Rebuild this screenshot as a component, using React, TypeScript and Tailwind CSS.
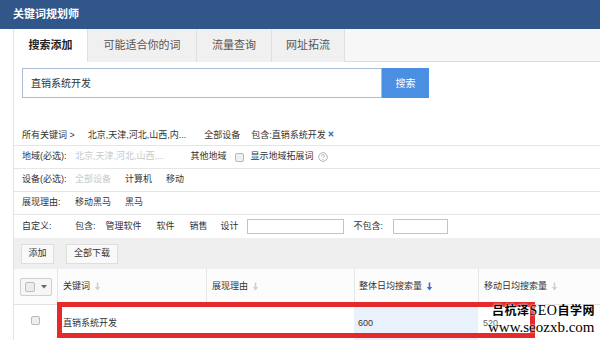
import React from 'react';

const Arrow: React.FC<{ active?: boolean }> = ({ active }) => (
  <svg width="7" height="9" viewBox="0 0 7 9" className="ml-[4px]">
    <path d="M3.5 0.5v6" stroke={active ? '#3a6fc6' : '#cfcfcf'} strokeWidth="1.6" />
    <path d="M0.8 5l2.7 3.5L6.2 5z" fill={active ? '#3a6fc6' : '#cfcfcf'} />
  </svg>
);

const Check: React.FC = () => (
  <span className="inline-block w-[9px] h-[9px] border border-[#b9b9b9] bg-[#efefef] rounded-[2px]" />
);

const App: React.FC = () => {
  const tabs = [
    { label: '搜索添加', w: 'w-[74px]', active: true },
    { label: '可能适合你的词', w: 'w-[109px]', active: false },
    { label: '流量查询', w: 'w-[75px]', active: false },
    { label: '网址拓流', w: 'w-[73px]', active: false },
  ];

  return (
    <div className="relative w-[600px] h-[340px] overflow-hidden bg-white text-[#333] font-['Liberation_Sans','Noto_Sans_CJK_SC',sans-serif]">
      <div className="h-[29px] bg-[#30568a] flex items-center pl-[13px] text-white text-[11px] font-bold">
        关键词规划师
      </div>

      <div className="ml-[13px] h-[311px] border-l border-[#e2e2e2]">
        {/* tabs */}
        <div className="h-[33px] flex bg-[#f7f7f7] border-b border-[#dcdcdc]">
          {tabs.map((t) => (
            <div
              key={t.label}
              className={`${t.w} h-[33px] flex items-center justify-center text-[11px] border-r border-[#e0e0e0] ${
                t.active ? 'bg-white font-bold text-[#222]' : 'bg-[#f0f0f0] text-[#555] h-[32px]'
              }`}
            >
              {t.label}
            </div>
          ))}
        </div>

        {/* search */}
        <div className="mt-[6px] ml-[8px] flex h-[30px]">
          <div className="w-[360px] h-[30px] border border-[#a9bcd4] flex items-center pl-[8px] text-[10px] text-[#333]">
            直销系统开发
          </div>
          <div className="w-[47px] h-[30px] bg-[#4b8fe2] text-white text-[10px] flex items-center justify-center">
            搜索
          </div>
        </div>

        {/* filters */}
        <div className="mt-[29px] text-[9px]">
          <div className="h-[19px] flex items-center pl-[8px] pb-[1px] border-b border-[#e6e6e6]">
            <span>所有关键词 &gt;</span>
            <span className="ml-[13px]">北京,天津,河北,山西,内...</span>
            <span className="ml-[18px]">全部设备</span>
            <span className="ml-[11px]">包含:直销系统开发</span>
            <svg width="6" height="6" viewBox="0 0 6 6" className="ml-[2px] mb-[3px]">
              <path d="M0.8 0.8l4.4 4.4M5.2 0.8L0.8 5.2" stroke="#3a73c8" strokeWidth="1.4" />
            </svg>
          </div>

          <div className="h-[23px] flex items-center pl-[8px] border-b border-[#e6e6e6]">
            <span className="w-[53px]">地域(必选):</span>
            <span className="text-[#c9c9c9]">北京,天津,河北,山西,...</span>
            <span className="ml-[26px]">其他地域</span>
            <span className="ml-[8px] flex items-center"><Check /></span>
            <span className="ml-[7px]">显示地域拓展词</span>
            <svg width="10" height="10" viewBox="0 0 10 10" className="ml-[4px]">
              <circle cx="5" cy="5" r="4.3" fill="none" stroke="#aaa" strokeWidth="0.9" />
              <path d="M3.6 4a1.4 1.4 0 1 1 1.9 1.3c-.4.2-.5.4-.5.9" fill="none" stroke="#aaa" strokeWidth="0.9" />
              <circle cx="5" cy="7.4" r="0.5" fill="#aaa" />
            </svg>
          </div>

          <div className="h-[23px] flex items-center pl-[8px] border-b border-[#e6e6e6]">
            <span className="w-[53px]">设备(必选):</span>
            <span className="text-[#c9c9c9]">全部设备</span>
            <span className="ml-[14px]">计算机</span>
            <span className="ml-[14px]">移动</span>
          </div>

          <div className="h-[23px] flex items-center pl-[8px] border-b border-[#e6e6e6]">
            <span className="w-[53px]">展现理由:</span>
            <span>移动黑马</span>
            <span className="ml-[14px]">黑马</span>
          </div>

          <div className="h-[23px] flex items-center pl-[8px]">
            <span className="w-[53px]">自定义:</span>
            <span>包含:</span>
            <span className="ml-[10px]">管理软件</span>
            <span className="ml-[15px]">软件</span>
            <span className="ml-[15px]">销售</span>
            <span className="ml-[13px]">设计</span>
            <span className="ml-[8px] w-[97px] h-[15px] border border-[#c4c4c4] bg-white" />
            <span className="ml-[10px]">不包含:</span>
            <span className="ml-[10px] w-[55px] h-[15px] border border-[#c4c4c4] bg-white" />
          </div>
        </div>

        {/* toolbar */}
        <div className="h-[31px] bg-[#efefef] flex items-center pl-[7px] text-[9px]">
          <div className="w-[33px] h-[20px] border border-[#dedede] bg-[#f9f9f9] flex items-center justify-center">
            添加
          </div>
          <div className="ml-[12px] w-[52px] h-[20px] border border-[#dedede] bg-[#f9f9f9] flex items-center justify-center">
            全部下载
          </div>
        </div>

        {/* table */}
        <div className="text-[9px]">
          <div className="grid grid-cols-[43px_149px_148px_124px_1fr] h-[36px] bg-[#fcfcfc] border-b border-[#e3e3e3]">
            <div className="flex items-center justify-center">
              <div className="w-[32px] h-[18px] border border-[#cfcfcf] bg-[#f6f6f6] rounded-[2px] flex items-center pl-[4px]">
                <span className="inline-block w-[10px] h-[10px] border border-[#bdbdbd] bg-[#ececec] rounded-[2px]" />
                <svg width="6" height="4" viewBox="0 0 6 4" className="ml-[6px]">
                  <path d="M0 0h6L3 3.5z" fill="#666" />
                </svg>
              </div>
            </div>
            <div className="flex items-center pl-[5px] border-l border-[#e6e6e6]">
              关键词<Arrow />
            </div>
            <div className="flex items-center pl-[5px] border-l border-[#e6e6e6]">
              展现理由<Arrow />
            </div>
            <div className="flex items-center pl-[4px] border-l border-[#e6e6e6]">
              整体日均搜索量<Arrow active />
            </div>
            <div className="flex items-center pl-[5px] border-l border-[#e6e6e6]">
              移动日均搜索量<Arrow />
            </div>
          </div>

          <div className="grid grid-cols-[43px_149px_148px_124px_1fr] h-[35px]">
            <div className="flex items-center justify-center pb-[4px]">
              <Check />
            </div>
            <div className="flex items-center pl-[6px] pt-[2px]">直销系统开发</div>
            <div />
            <div className="flex items-center pl-[4px] pt-[2px] bg-[#e9f1fc]">600</div>
            <div className="flex items-center pl-[5px] pt-[2px] text-[#666]">520</div>
          </div>
        </div>
      </div>

      {/* annotation */}
      <div className="absolute left-[57px] top-[302px] w-[478px] h-[36px] border-[5px] border-[#e62a2c]" />

      {/* watermark */}
      <div className="absolute left-[488px] top-[303px] whitespace-nowrap text-black font-['Liberation_Serif','Noto_Sans_CJK_SC',serif] [text-shadow:0_0_2px_#fff,0_0_2px_#fff]">
        <div className="text-[12px] leading-[16px] tracking-[0.5px] pl-[4px]">
          <span className="font-bold">吕杭泽</span>
          <span className="text-[14px]">SEO</span>
          <span className="font-bold">自学网</span>
        </div>
        <div className="text-[15px] leading-[17px]">www.seozxb.com</div>
      </div>
    </div>
  );
};

export default App;
